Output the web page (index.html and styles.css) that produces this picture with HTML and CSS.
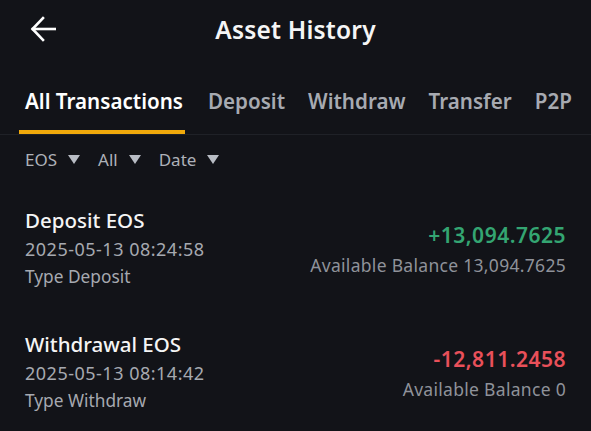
FILE: index.html
```html
<!DOCTYPE html>
<html>
<head>
<meta charset="utf-8">
<link rel="stylesheet" href="styles.css">
</head>
<body>
<div class="page">
  <header class="header">
    <svg class="back" width="26" height="26" viewBox="0 0 26 26" fill="none" stroke="#fff" stroke-width="2.6" stroke-linecap="square">
      <path d="M3 13 H25"/>
      <path d="M13 2 L2.5 13 L13 24"/>
    </svg>
    <h1 class="title">Asset History</h1>
  </header>
  <nav class="tabs">
    <div class="tab active">All Transactions</div>
    <div class="tab">Deposit</div>
    <div class="tab">Withdraw</div>
    <div class="tab">Transfer</div>
    <div class="tab">P2P</div>
  </nav>
  <div class="filters">
    <div class="filter">EOS <span class="tri"></span></div>
    <div class="filter">All <span class="tri"></span></div>
    <div class="filter">Date <span class="tri"></span></div>
  </div>
  <div class="list">
    <div class="row">
      <div class="left">
        <div class="name">Deposit EOS</div>
        <div class="date">2025-05-13 08:24:58</div>
        <div class="type">Type Deposit</div>
      </div>
      <div class="right">
        <div class="amount pos">+13,094.7625</div>
        <div class="bal">Available Balance 13,094.7625</div>
      </div>
    </div>
    <div class="row">
      <div class="left">
        <div class="name">Withdrawal EOS</div>
        <div class="date">2025-05-13 08:14:42</div>
        <div class="type">Type Withdraw</div>
      </div>
      <div class="right">
        <div class="amount neg">-12,811.2458</div>
        <div class="bal">Available Balance 0</div>
      </div>
    </div>
  </div>
</div>
</body>
</html>
```
FILE: styles.css
```css
html, body {
  margin: 0;
  padding: 0;
  background: #121318;
}
body {
  font-family: "Noto Sans", "Open Sans", sans-serif;
  color: #eaecef;
  width: 591px;
  height: 431px;
  overflow: hidden;
}
.page {
  display: flex;
  flex-direction: column;
}
.header {
  height: 58px;
  display: flex;
  align-items: center;
  justify-content: center;
  position: relative;
}
.back {
  position: absolute;
  left: 30px;
  top: 16px;
}
.title {
  margin: 0;
  font-size: 24.5px;
  font-weight: 600;
  color: #f5f5f5;
  letter-spacing: 0.2px;
}
.tabs {
  display: flex;
  gap: 23px;
  padding: 0 0 0 25px;
  height: 77px;
  align-items: flex-end;
  border-bottom: 1px solid #1f2127;
  box-sizing: border-box;
}
.tab {
  font-size: 20.6px;
  font-weight: 600;
  color: #a7aab1;
  padding-bottom: 19px;
  position: relative;
  white-space: nowrap;
}
.tab.active {
  color: #ffffff;
  margin-right: 2px;
}
.tab.active::after {
  content: "";
  position: absolute;
  left: -6px;
  right: -2px;
  bottom: 0;
  height: 4px;
  background: #f0a90b;
}
.filters {
  display: flex;
  gap: 18px;
  padding: 13px 25px 0;
  height: 36px;
  box-sizing: border-box;
}
.filter {
  font-size: 17px;
  color: #aeb1b8;
  display: flex;
  align-items: center;
  gap: 11px;
  line-height: 22px;
}
.tri {
  width: 0;
  height: 0;
  border-left: 6px solid transparent;
  border-right: 6px solid transparent;
  border-top: 9px solid #b8bcc4;
}
.list {
  display: flex;
  flex-direction: column;
  padding: 0 25px;
}
.row {
  display: flex;
  justify-content: space-between;
  align-items: center;
  padding-top: 35px;
  height: 125px;
  box-sizing: border-box;
}
.row:first-child {
  padding-top: 36px;
}
.left, .right {
  display: flex;
  flex-direction: column;
}
.left {
  align-self: flex-start;
}
.right {
  align-items: flex-end;
  gap: 5px;
  margin-top: -5px;
}
.name {
  font-size: 20.5px;
  font-weight: 500;
  color: #f5f5f5;
  line-height: 27px;
}
.date {
  font-size: 18px;
  color: #a6a9b0;
  letter-spacing: 0.5px;
  line-height: 30px;
}
.type {
  font-size: 17.3px;
  color: #a6a9b0;
  line-height: 26px;
}
.amount {
  font-size: 21px;
  font-weight: 600;
  letter-spacing: 0.5px;
  line-height: 26px;
}
.amount.pos { color: #34a572; }
.amount.neg { color: #e9505a; }
.bal {
  font-size: 17.5px;
  color: #8f929a;
  letter-spacing: 0.3px;
  line-height: 24px;
}
```
